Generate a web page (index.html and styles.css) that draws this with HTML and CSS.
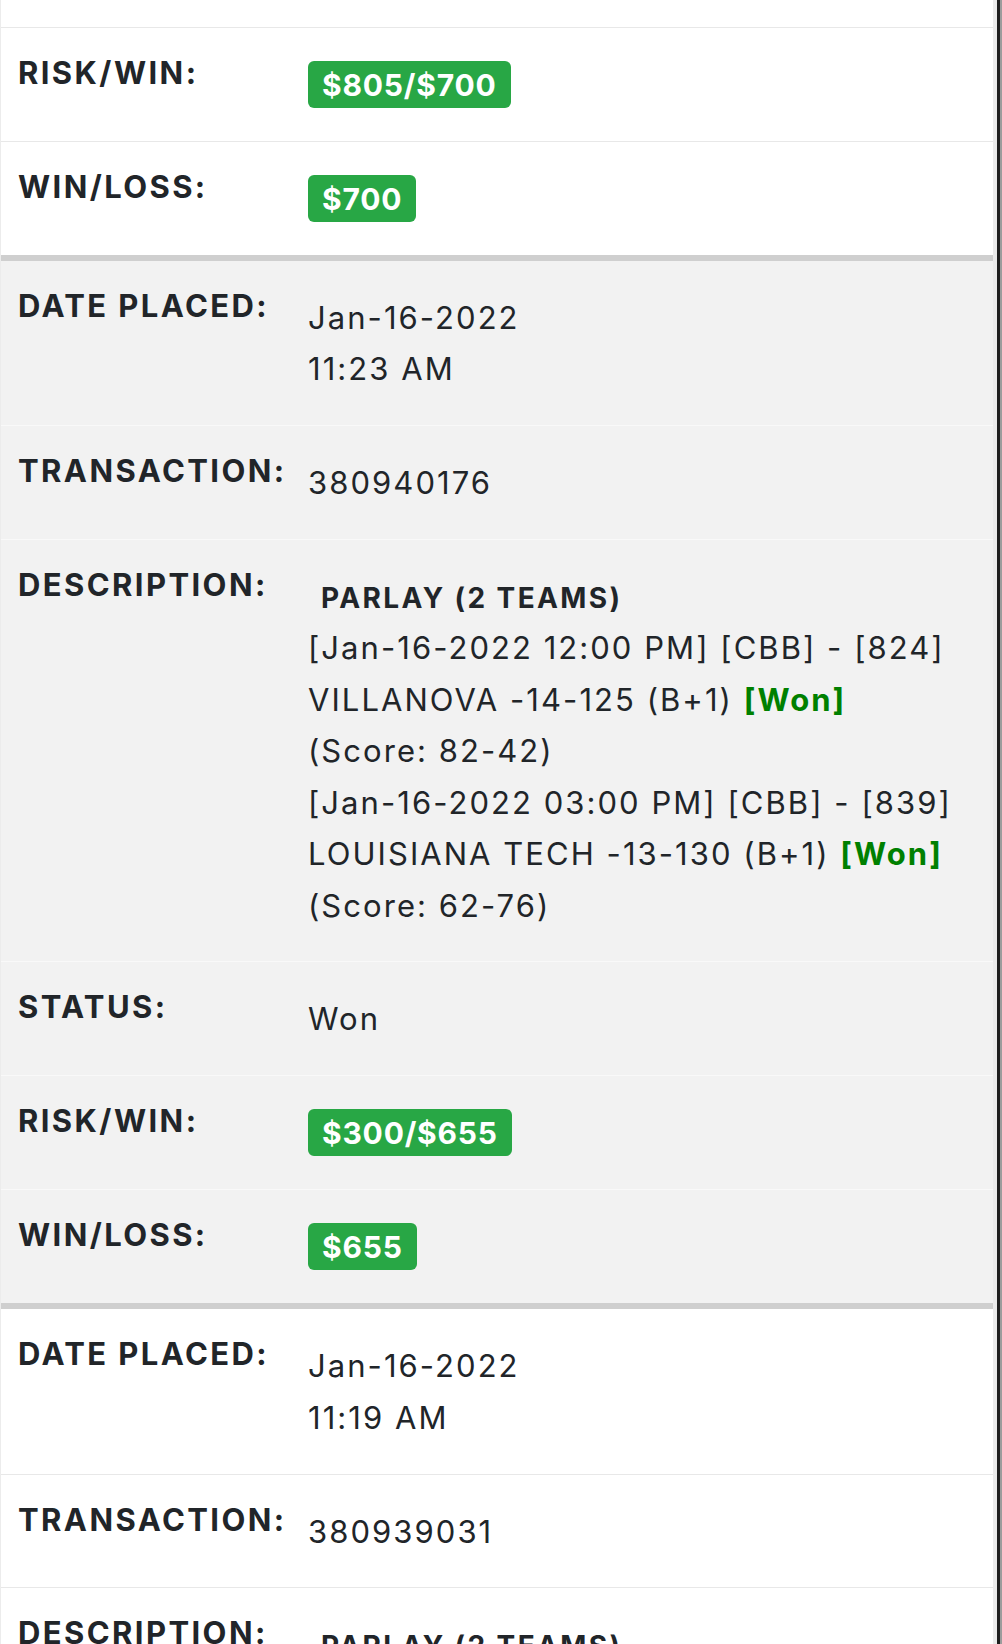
FILE: index.html
```html
<!DOCTYPE html>
<html lang="en">
<head>
<meta charset="utf-8">
<title>Bet history</title>
<link rel="stylesheet" href="styles.css">
</head>
<body>
<div class="page">
  <div class="list">
    <section class="bet bet-white bet-first">
      <div class="row row-tail"></div>
      <div class="row">
        <div class="label">RISK/WIN:</div>
        <div class="value"><span class="badge">$805/$700</span></div>
      </div>
      <div class="row">
        <div class="label">WIN/LOSS:</div>
        <div class="value"><span class="badge">$700</span></div>
      </div>
    </section>

    <section class="bet bet-grey">
      <div class="row">
        <div class="label">DATE PLACED:</div>
        <div class="value">Jan-16-2022<br>11:23 AM</div>
      </div>
      <div class="row">
        <div class="label">TRANSACTION:</div>
        <div class="value">380940176</div>
      </div>
      <div class="row">
        <div class="label">DESCRIPTION:</div>
        <div class="value">
          <div class="desc-title">PARLAY (2 TEAMS)</div>
          <div>[Jan-16-2022 12:00 PM] [CBB] - [824]</div>
          <div>VILLANOVA -14-125 (B+1) <span class="won">[Won]</span></div>
          <div>(Score: 82-42)</div>
          <div>[Jan-16-2022 03:00 PM] [CBB] - [839]</div>
          <div>LOUISIANA TECH -13-130 (B+1) <span class="won">[Won]</span></div>
          <div>(Score: 62-76)</div>
        </div>
      </div>
      <div class="row">
        <div class="label">STATUS:</div>
        <div class="value">Won</div>
      </div>
      <div class="row">
        <div class="label">RISK/WIN:</div>
        <div class="value"><span class="badge">$300/$655</span></div>
      </div>
      <div class="row">
        <div class="label">WIN/LOSS:</div>
        <div class="value"><span class="badge">$655</span></div>
      </div>
    </section>

    <section class="bet bet-white">
      <div class="row">
        <div class="label">DATE PLACED:</div>
        <div class="value">Jan-16-2022<br>11:19 AM</div>
      </div>
      <div class="row">
        <div class="label">TRANSACTION:</div>
        <div class="value">380939031</div>
      </div>
      <div class="row">
        <div class="label">DESCRIPTION:</div>
        <div class="value">
          <div class="desc-title">PARLAY (2 TEAMS)</div>
          <div>[Jan-16-2022 12:00 PM] [CBB] - [824]</div>
        </div>
      </div>
    </section>
  </div>
  <div class="edge"></div>
</div>
</body>
</html>
```

FILE: styles.css
```css
html, body {
  margin: 0;
  padding: 0;
  background: #ffffff;
}

body {
  font-family: "Inter", "Liberation Sans", sans-serif;
  color: #212529;
}

.page {
  display: flex;
  height: 1644px;
  overflow: hidden;
}

.list {
  flex: 1;
  border-left: 1px solid #ececec;
  min-width: 0;
}

.edge {
  width: 9px;
  flex: none;
  background: linear-gradient(to right, #ebebeb 0 4px, #1e1e1e 4px 7px, #9c9c9c 7px 9px);
}

.bet-white {
  background: #ffffff;
}

.bet-grey {
  background: #f2f2f2;
}

.bet {
  border-top: 6px solid #cfcfcf;
}

.bet-first {
  border-top: none;
}

.row {
  display: grid;
  grid-template-columns: 290px 1fr;
  padding: 27px 17px 30.4px;
  border-top: 1px solid #e8e8e8;
}

.bet-grey .row {
  border-top-color: #f9f9f9;
}

.bet > .row:first-child {
  border-top: none;
}

.row-tail {
  height: 28px;
  padding: 0;
  box-sizing: border-box;
  border-bottom: 1px solid #e8e8e8;
}

.row-tail + .row {
  border-top: none;
}

.label {
  font-size: 31px;
  line-height: 36px;
  font-weight: 700;
  letter-spacing: 2.4px;
  white-space: nowrap;
}

.value {
  padding-top: 4px;
  font-size: 31px;
  line-height: 51.5px;
  font-weight: 400;
  letter-spacing: 2.05px;
  white-space: nowrap;
}

.desc-title {
  margin-top: 3px;
  padding-left: 13px;
  font-size: 28px;
  line-height: 48px;
  font-weight: 700;
  letter-spacing: 2.4px;
}

.won {
  color: #008000;
  font-weight: 700;
}

.badge {
  display: inline-block;
  vertical-align: top;
  margin-top: 2px;
  padding: 9px 14px 8px;
  font-size: 30px;
  line-height: 30px;
  font-weight: 700;
  color: #ffffff;
  background: #28a745;
  border-radius: 6px;
  letter-spacing: 0.8px;
}
```
